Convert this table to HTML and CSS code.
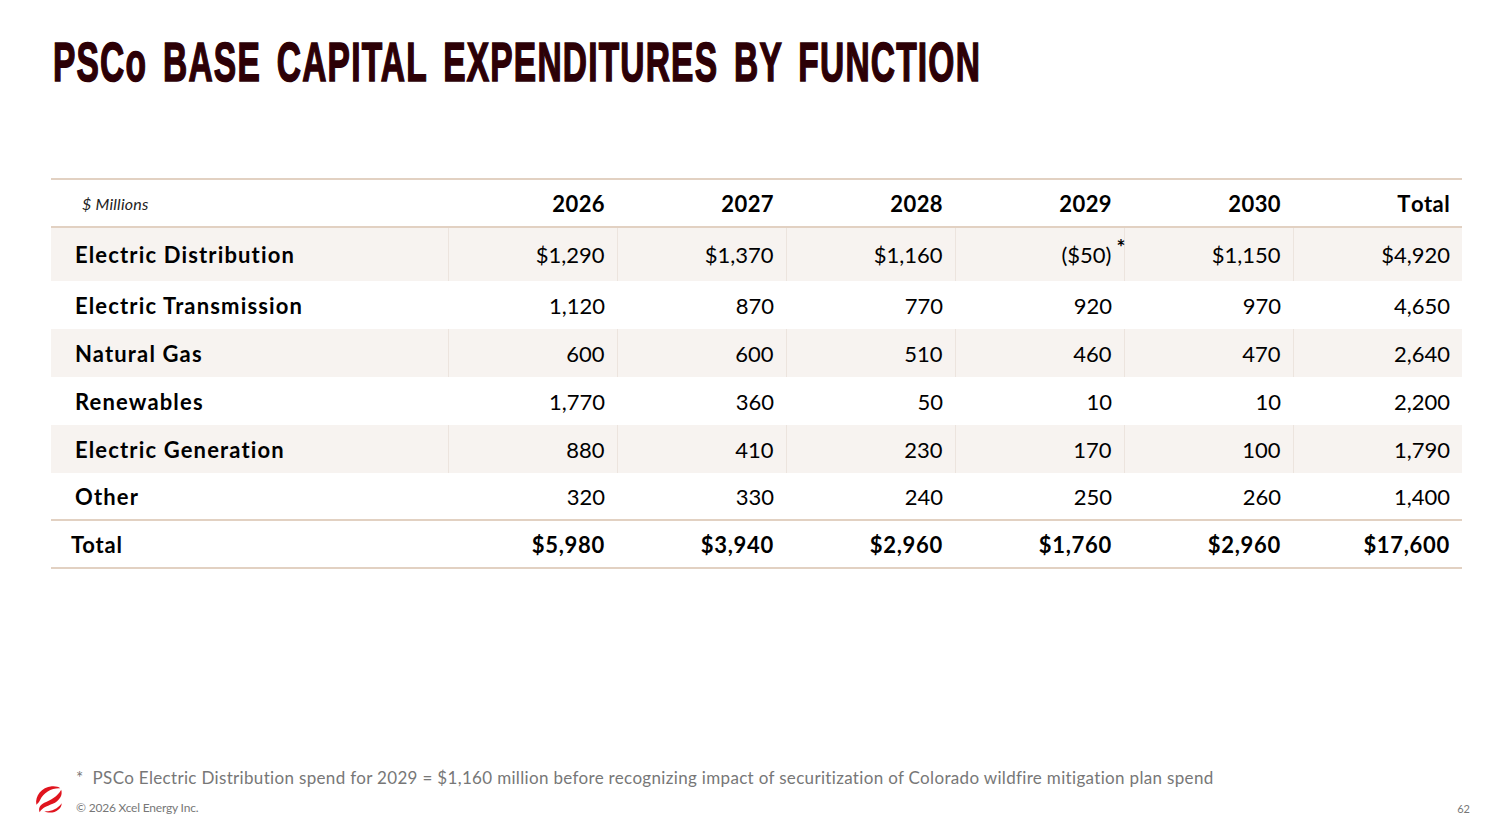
FILE: index.html
```html
<!DOCTYPE html>
<html>
<head>
<meta charset="utf-8">
<link rel="stylesheet" href="styles.css">
</head>
<body>
<div class="slide">
  <h1 class="title"><span>PSCo BASE CAPITAL EXPENDITURES BY FUNCTION</span></h1>
  <table class="capex">
    <colgroup>
      <col class="c-label"><col class="c-num"><col class="c-num"><col class="c-num"><col class="c-num"><col class="c-num"><col class="c-num">
    </colgroup>
    <thead>
      <tr>
        <th class="unit">$ Millions</th>
        <th>2026</th><th>2027</th><th>2028</th><th>2029</th><th>2030</th><th>Total</th>
      </tr>
    </thead>
    <tbody>
      <tr class="shade"><td class="label">Electric Distribution</td><td>$1,290</td><td>$1,370</td><td>$1,160</td><td><span class="neg">($50)<sup>*</sup></span></td><td>$1,150</td><td>$4,920</td></tr>
      <tr><td class="label">Electric Transmission</td><td>1,120</td><td>870</td><td>770</td><td>920</td><td>970</td><td>4,650</td></tr>
      <tr class="shade"><td class="label">Natural Gas</td><td>600</td><td>600</td><td>510</td><td>460</td><td>470</td><td>2,640</td></tr>
      <tr><td class="label">Renewables</td><td>1,770</td><td>360</td><td>50</td><td>10</td><td>10</td><td>2,200</td></tr>
      <tr class="shade"><td class="label">Electric Generation</td><td>880</td><td>410</td><td>230</td><td>170</td><td>100</td><td>1,790</td></tr>
      <tr class="last"><td class="label">Other</td><td>320</td><td>330</td><td>240</td><td>250</td><td>260</td><td>1,400</td></tr>
    </tbody>
    <tfoot>
      <tr><td class="label">Total</td><td>$5,980</td><td>$3,940</td><td>$2,960</td><td>$1,760</td><td>$2,960</td><td>$17,600</td></tr>
    </tfoot>
  </table>
  <div class="spacer"></div>
  <footer class="foot">
    <svg class="logo" viewBox="0 0 32 32" width="30" height="30">
      <path d="M2.5 22 C1 13 8 3.5 19 2.5 C23 2.2 26 3 28 4.5 C19 4 10 9 6.5 17 C5.5 19 4 21 2.5 22 Z" fill="#e0141e"/>
      <path d="M29 6 C31 12 27 18 20 21 C14 23.5 9 25 6 30 C4.5 26 6 22.5 11 20 C18 16.5 25 13.5 29 6 Z" fill="#e0141e"/>
      <path d="M11 29 C18 29.5 25 27 29.5 20.5 C29.5 26 24 30.5 17 30.5 C14.5 30.5 12.5 30 11 29 Z" fill="#e0141e"/>
    </svg>
    <div class="foot-text">
      <p class="note"><span class="star">*</span>PSCo Electric Distribution spend for 2029 = $1,160 million before recognizing impact of securitization of Colorado wildfire mitigation plan spend</p>
      <p class="copy">© 2026 Xcel Energy Inc.</p>
    </div>
    <div class="page">62</div>
  </footer>
</div>
</body>
</html>
```
FILE: styles.css
```css
html, body {
  margin: 0;
  padding: 0;
  background: #ffffff;
}
.slide {
  width: 1500px;
  height: 837px;
  box-sizing: border-box;
  display: flex;
  flex-direction: column;
  padding: 0 39px 0 51px;
  font-family: "Lato", "Liberation Sans", sans-serif;
  color: #000;
}
.title {
  margin: 34px 0 0 2px;
  height: 56px;
  font-family: "Liberation Sans Narrow", "Liberation Sans", sans-serif;
  font-weight: 700;
  font-size: 33.5px;
  line-height: 33.6px;
  color: #2c0006;
  white-space: nowrap;
}
.title span {
  display: inline-block;
  transform-origin: left top;
  transform: scaleY(1.6667);
  letter-spacing: 1.2px;
  word-spacing: 5.4px;
  -webkit-text-stroke: 0.96px #2c0006;
}
.capex {
  margin-top: 88px;
  width: 1410px;
  border-collapse: collapse;
  table-layout: fixed;
}
.c-label { width: 397px; }
.c-num { width: 169px; }
.capex thead tr {
  border-top: 2px solid #e2d1c2;
  border-bottom: 2px solid #e2d1c2;
}
.capex th {
  height: 46px;
  padding: 0 12px 0 0;
  text-align: right;
  font-size: 22px;
  font-weight: 700;
  vertical-align: middle;
  font-kerning: none;
  letter-spacing: 0.4px;
}
.capex th.unit {
  text-align: left;
  padding-left: 31px;
  font-size: 16px;
  font-weight: 400;
  font-style: italic;
  color: #222;
  letter-spacing: 0.2px;
}
.capex td {
  padding: 0 12px 0 0;
  text-align: right;
  font-size: 22px;
  font-weight: 400;
  height: 48px;
  vertical-align: middle;
}
.capex tbody tr:first-child td { height: 53px; }
.capex tbody tr.last td { height: 46px; }
.capex td.label {
  text-align: left;
  padding-left: 24px;
  font-weight: 700;
  letter-spacing: 1.15px;
}
.capex tr.shade td { background: #f7f3f0; }
.capex tr.shade td + td { border-left: 1px solid #ece4de; }
.neg { position: relative; }
.neg sup {
  position: absolute;
  left: 100%;
  top: -5px;
  margin-left: 5px;
  font-size: 21px;
  line-height: 21px;
  font-weight: 700;
}
.capex tfoot tr {
  border-top: 2px solid #e2d1c2;
  border-bottom: 2px solid #e2d1c2;
}
.capex tfoot td {
  height: 46px;
  font-weight: 700;
  letter-spacing: 0.7px;
}
.capex tfoot td.label { padding-left: 20px; letter-spacing: 0.8px; }
.spacer { flex: 1; }
.foot {
  display: flex;
  align-items: flex-end;
  margin-left: -17px;
  margin-right: -9px;
  padding-bottom: 22px;
}
.logo {
  flex: none;
  margin-right: 12px;
  margin-bottom: 1px;
}
.foot-text { flex: 1; }
.note {
  margin: 0 0 12px 0;
  font-size: 17px;
  color: #777;
  letter-spacing: 0.33px;
}
.star {
  margin-right: 9px;
}
.copy {
  margin: 0;
  font-size: 12px;
  color: #777;
  letter-spacing: -0.2px;
}
.page {
  font-size: 11px;
  color: #777;
}
```
